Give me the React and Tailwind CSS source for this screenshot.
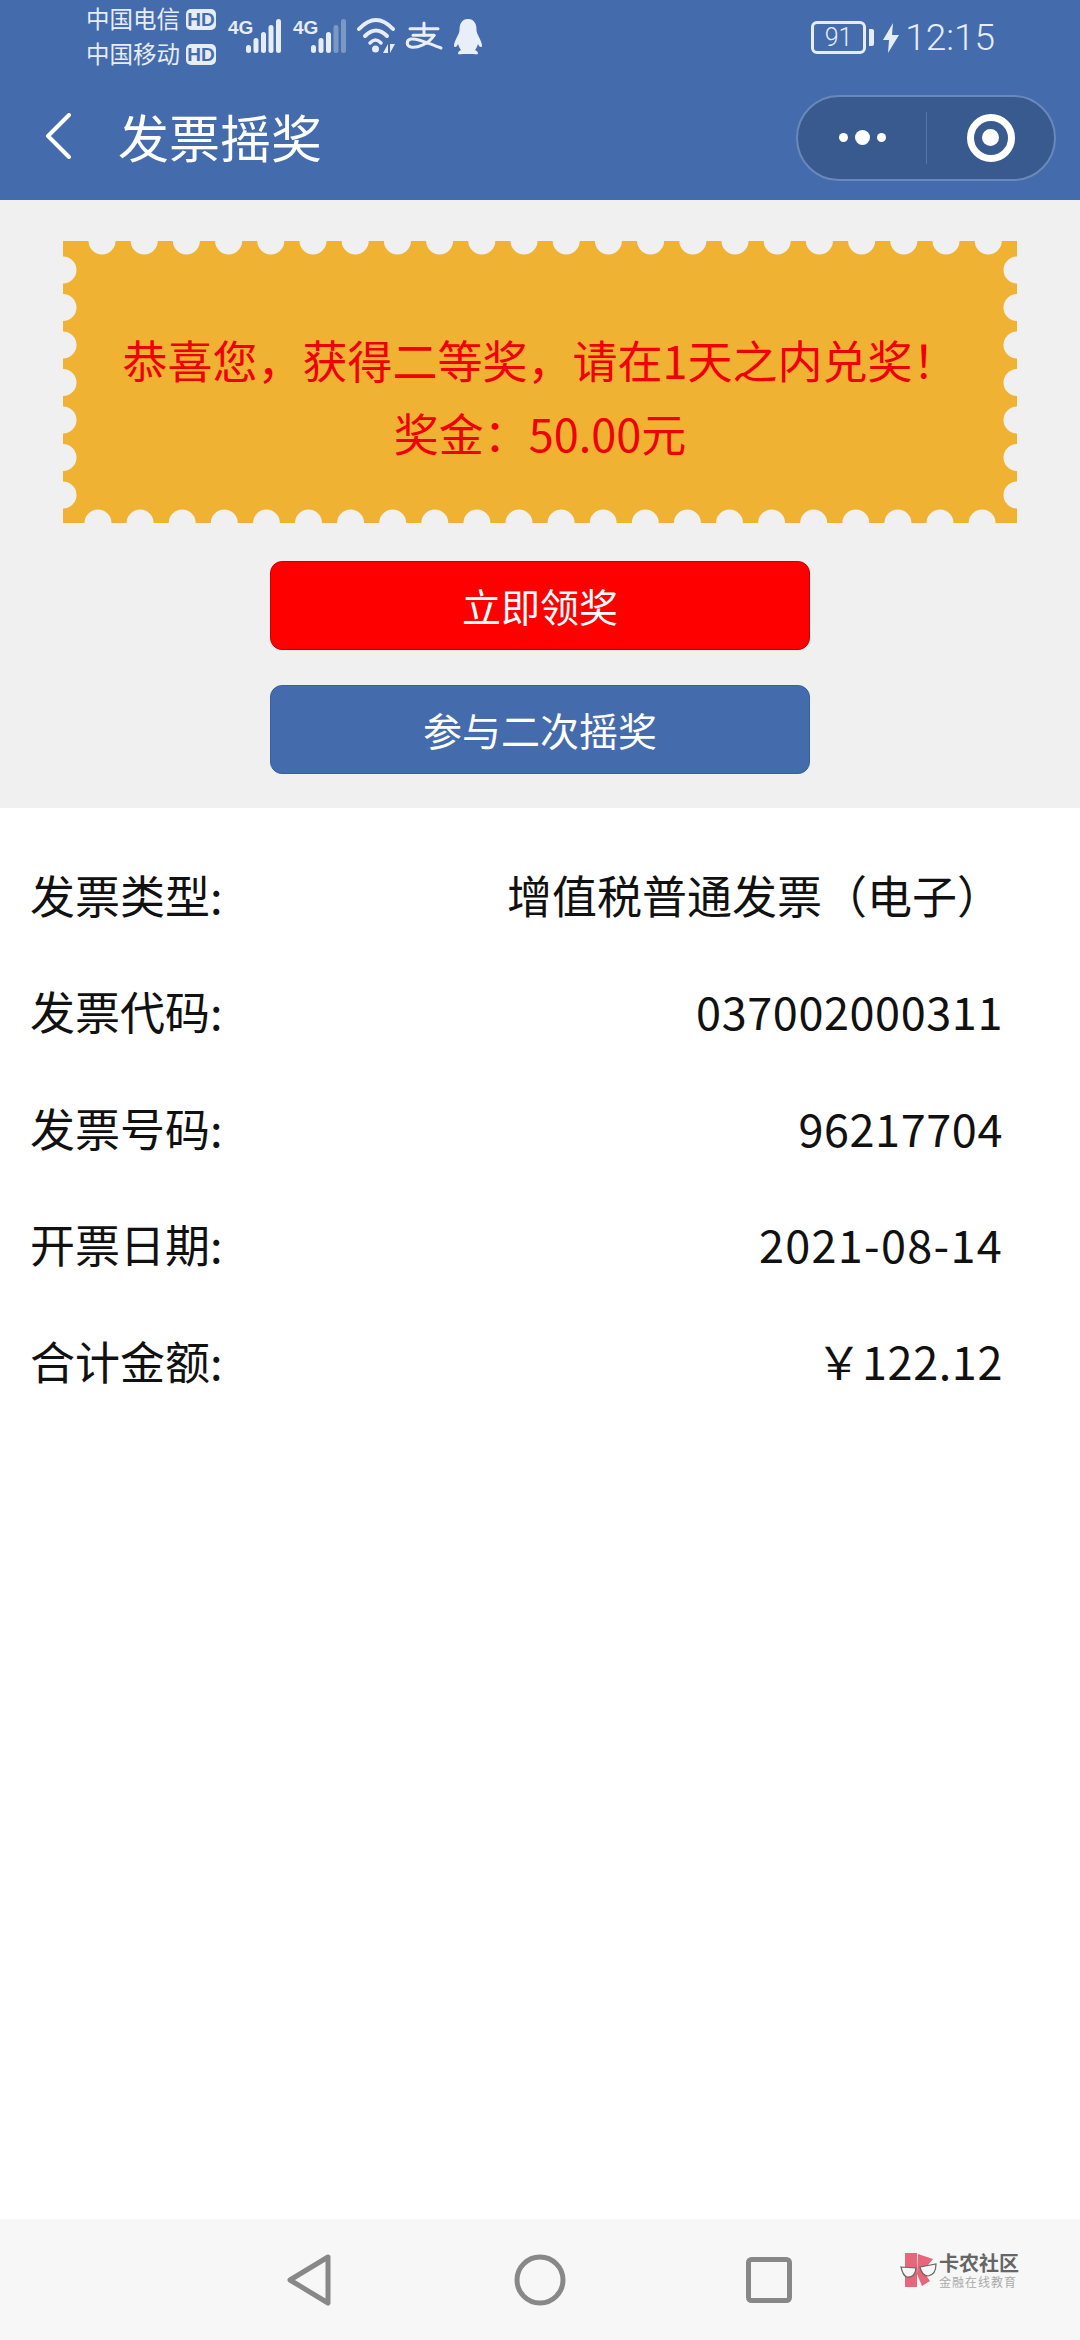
const rows = [
  { label: "发票类型:", value: "增值税普通发票（电子）", valueClass: "mr-[1px]" },
  { label: "发票代码:", value: "037002000311", valueClass: "tracking-[0.6px]" },
  { label: "发票号码:", value: "96217704", valueClass: "tracking-[0.6px]" },
  { label: "开票日期:", value: "2021-08-14", valueClass: "tracking-[1.3px]" },
  { label: "合计金额:", value: "￥122.12", valueClass: "tracking-[0.6px]" },
];

// perforated edge of the ticket, clockwise from top left
const stampPath = () => {
  const w = 954;
  const h = 282;
  const r = 13.5;
  let d = "M0 0";
  for (let i = 0; i < 22; i++) {
    const c = 39 + 42.2 * i;
    d += ` L${c - r} 0 A${r} ${r} 0 0 0 ${c + r} 0`;
  }
  d += ` L${w} 0`;
  for (let i = 0; i < 7; i++) {
    const c = 29 + 37.5 * i;
    d += ` L${w} ${c - r} A${r} ${r} 0 0 0 ${w} ${c + r}`;
  }
  d += ` L${w} ${h}`;
  for (let i = 21; i >= 0; i--) {
    const c = 35 + 42.1 * i;
    d += ` L${c + r} ${h} A${r} ${r} 0 0 0 ${c - r} ${h}`;
  }
  d += ` L0 ${h}`;
  for (let i = 6; i >= 0; i--) {
    const c = 29 + 37.5 * i;
    d += ` L0 ${c + r} A${r} ${r} 0 0 0 0 ${c - r}`;
  }
  return d + " Z";
};

const Carrier = ({ name }) => (
  <div className="flex items-center h-[35px]">
    <span className="text-[23.5px] leading-none text-[#e6edf7] w-[100px]">{name}</span>
    <span className="w-[30px] h-[21px] rounded-[5px] bg-[#e6edf7] text-[#446bab] text-[19px] leading-[21px] font-bold text-center font-['Liberation_Sans_Narrow','Liberation_Sans',sans-serif]">
      HD
    </span>
  </div>
);

const Signal = ({ weak }) => (
  <div className="flex items-start w-[53px] h-[34px] mb-[4px]">
    <span className="w-[18px] mt-[1px] text-[19px] leading-[15px] font-bold text-[#e6edf7] font-['Liberation_Sans_Narrow','Liberation_Sans',sans-serif]">
      4G
    </span>
    <svg width="35" height="34" viewBox="0 0 35 34" fill="#e6edf7">
      <rect x="0" y="26" width="5" height="8" rx="2.5" />
      <rect x="7.5" y="19" width="5" height="15" rx="2.5" />
      <rect x="15" y="13" width="5" height="21" rx="2.5" />
      <rect x="22.5" y="6" width="5" height="28" rx="2.5" opacity={weak ? 0.35 : 1} />
      <rect x="30" y="0" width="5" height="34" rx="2.5" opacity={weak ? 0.35 : 1} />
    </svg>
  </div>
);

const Wifi = () => (
  <svg width="40" height="36" viewBox="0 0 40 36" fill="none" className="ml-[11px] mb-[4px]">
    <path d="M2 11Q19 -7 36 11" stroke="#e6edf7" strokeWidth="4" strokeLinecap="round" />
    <path d="M8 18Q19 7 30 18" stroke="#e6edf7" strokeWidth="4" strokeLinecap="round" />
    <path d="M13 25Q18.5 19 24 25" stroke="#e6edf7" strokeWidth="3.5" strokeLinecap="round" />
    <circle cx="18.5" cy="31" r="3.5" fill="#e6edf7" />
    <path d="M31 26V35H26Z M33 35V26H38Z" fill="#e6edf7" />
  </svg>
);

const AlipayMark = () => (
  <svg width="38" height="32" viewBox="0 0 38 32" fill="none" className="ml-[8px] mb-[3px]" stroke="#e9eff8" strokeWidth="3" strokeLinecap="round">
    <path d="M5 8.7H33" />
    <path d="M19 3V15.3" />
    <path d="M8 15.3H29" />
    <path d="M29 15.3C24 24 12 28 6 27C1 26 1 20 6 19C14 18 24 24 36 28" />
  </svg>
);

const Penguin = () => (
  <svg width="30" height="36" viewBox="0 0 30 36" fill="#e9eff8" className="ml-[10px] mb-[2px]">
    <path d="M15 0C8 0 6.5 6 6.5 11C6.5 15 2 20 1 26C.8 28 2 29 4 27L5 25C6 28 7 30 8 31C6 32 5 33 5 34.5C5 35.5 7 35.5 10 35H20C23 35.5 25 35.5 25 34.5C25 33 24 32 22 31C23 30 24 28 25 25L26 27C28 29 29.2 28 29 26C28 20 23.5 15 23.5 11C23.5 6 22 0 15 0Z" />
  </svg>
);

const Battery = () => (
  <div className="flex items-center">
    <div className="w-[55px] h-[33px] rounded-[6px] border-[3px] border-[#e6edf7] flex items-center justify-center text-[25px] leading-none text-[#e6edf7] font-light font-['Roboto',sans-serif]">
      91
    </div>
    <div className="w-[5px] h-[17px] ml-[3px] rounded-r-[2px] bg-[#e6edf7]" />
    <svg width="16" height="30" viewBox="0 0 16 30" fill="#e6edf7" className="ml-[9px]">
      <path d="M10 0L0 17H6L5 30L16 12H9Z" />
    </svg>
  </div>
);

const KaNongLogo = () => (
  <div className="absolute left-[900px] top-[34px] flex items-start">
    <svg width="38" height="38" viewBox="0 0 38 38" className="-mt-[2px]">
      <path d="M5 2H17V36H5Z" fill="#e8667a" />
      <path d="M18 3L33 8L23 20L30 30L22 35L17 23Z" fill="#e8667a" />
      <path d="M1 16L16 17Q15 27 7 26Q3 25 1 16Z" fill="#f7f7f7" stroke="#666666" strokeWidth="1.2" />
      <path d="M20 16L36 13Q36 24 28 25Q22 25 20 16Z" fill="#f7f7f7" stroke="#666666" strokeWidth="1.2" />
    </svg>
    <div className="ml-[1px] flex flex-col">
      <span className="text-[20px] leading-[20px] font-bold text-[#666666]">卡农社区</span>
      <span className="mt-[2px] text-[12px] leading-[13px] text-[#aaaaaa] tracking-[1px]">金融在线教育</span>
    </div>
  </div>
);

const App = () => {
  return (
    <div className="w-[1080px] h-[2340px] flex flex-col bg-white font-['Noto_Sans_CJK_SC','Noto_Sans',sans-serif]">
      <div className="bg-[#446bab] h-[200px] shrink-0">
        <div className="h-[75px] flex items-center pl-[86px] pr-[85px]">
          <div className="flex flex-col w-[142px] -mt-[2px]">
            <Carrier name="中国电信" />
            <Carrier name="中国移动" />
          </div>
          <Signal />
          <div className="w-[12px]" />
          <Signal weak />
          <Wifi />
          <AlipayMark />
          <Penguin />
          <div className="ml-auto flex items-center">
            <Battery />
            <span className="ml-[6px] text-[37px] leading-none font-light text-[#e6edf7] font-['Roboto',sans-serif]">
              12:15
            </span>
          </div>
        </div>
        <div className="h-[125px] flex items-center pl-[45px] pr-[24px]">
          <svg width="26" height="46" viewBox="0 0 26 46" fill="none" className="mb-[3px]">
            <path d="M24 2L3 23L24 44" stroke="#ffffff" strokeWidth="4" strokeLinecap="round" strokeLinejoin="round" />
          </svg>
          <span className="ml-[47px] mb-[2px] text-[51px] leading-none text-white">发票摇奖</span>
          <div className="ml-auto w-[260px] h-[86px] rounded-full bg-[#395a8f] border-2 border-[#6a88ba] flex items-center">
            <div className="w-[128px] flex items-center justify-center gap-[7px]">
              <span className="w-[9px] h-[9px] rounded-full bg-white" />
              <span className="w-[15px] h-[15px] rounded-full bg-white" />
              <span className="w-[9px] h-[9px] rounded-full bg-white" />
            </div>
            <div className="w-[1px] h-[52px] bg-[#5676a8]" />
            <div className="flex-1 flex items-center justify-center">
              <div className="w-[48px] h-[48px] rounded-full border-[7px] border-white flex items-center justify-center">
                <span className="w-[17px] h-[17px] rounded-full bg-white" />
              </div>
            </div>
          </div>
        </div>
      </div>

      <div className="bg-[#f0f0f0] h-[608px] shrink-0 flex flex-col items-center pt-[41px]">
        <div className="relative w-[954px] h-[282px] flex flex-col items-center pt-[82px]">
          <svg className="absolute inset-0" width="954" height="282" viewBox="0 0 954 282">
            <path d={stampPath()} fill="#f0b232" />
          </svg>
          <p className="relative text-[45px] leading-[73px] text-[#f00000]">恭喜您，获得二等奖，请在1天之内兑奖！</p>
          <p className="relative text-[45px] leading-[73px] text-[#f00000]">奖金：50.00元</p>
        </div>
        <button className="mt-[38px] w-[540px] h-[89px] rounded-[12px] bg-[#ff0000] border border-[#c80000] text-white text-[39px]">
          立即领奖
        </button>
        <button className="mt-[35px] w-[540px] h-[89px] rounded-[12px] bg-[#446bab] border border-[#3a5f9a] text-white text-[39px]">
          参与二次摇奖
        </button>
      </div>

      <div className="flex-1 pt-[28px]">
        {rows.map((row) => (
          <div key={row.label} className="h-[116.5px] flex items-center justify-between pl-[30px] pr-[77px] text-[45px] leading-none text-[#111111]">
            <span>{row.label}</span>
            <span className={row.valueClass}>{row.value}</span>
          </div>
        ))}
      </div>

      <div className="relative h-[121px] shrink-0 bg-[#f7f7f7] flex items-center pl-[286px]">
        <svg width="46" height="54" viewBox="0 0 46 54" fill="none">
          <path d="M42 4L4 27L42 50Z" stroke="#888888" strokeWidth="5" strokeLinejoin="round" />
        </svg>
        <svg width="52" height="52" viewBox="0 0 52 52" fill="none" className="ml-[182px]">
          <circle cx="26" cy="26" r="23" stroke="#888888" strokeWidth="5" />
        </svg>
        <svg width="46" height="46" viewBox="0 0 46 46" fill="none" className="ml-[180px]">
          <rect x="2.5" y="2.5" width="41" height="41" rx="3" stroke="#888888" strokeWidth="5" />
        </svg>
        <KaNongLogo />
      </div>
    </div>
  );
};

export default App;
